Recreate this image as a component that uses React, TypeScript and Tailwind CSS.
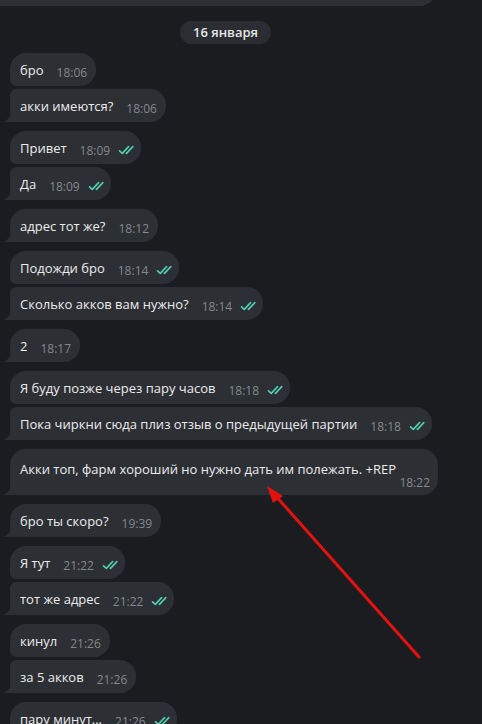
import React from "react";

type Pos = "first" | "mid" | "last" | "single";

type Msg = {
  text: string;
  time: string;
  out?: boolean;
  pos: Pos;
  gap?: boolean;
  wide?: boolean;
};

const messages: Msg[] = [
  { text: "бро", time: "18:06", pos: "first", gap: true },
  { text: "акки имеются?", time: "18:06", pos: "last" },
  { text: "Привет", time: "18:09", out: true, pos: "first", gap: true },
  { text: "Да", time: "18:09", out: true, pos: "last" },
  { text: "адрес тот же?", time: "18:12", pos: "single", gap: true },
  { text: "Подожди бро", time: "18:14", out: true, pos: "first", gap: true },
  { text: "Сколько акков вам нужно?", time: "18:14", out: true, pos: "last" },
  { text: "2", time: "18:17", pos: "single", gap: true },
  { text: "Я буду позже через пару часов", time: "18:18", out: true, pos: "first", gap: true },
  { text: "Пока чиркни сюда плиз отзыв о предыдущей партии", time: "18:18", out: true, pos: "last" },
  { text: "Акки топ, фарм хороший но нужно дать им полежать. +REP", time: "18:22", pos: "single", gap: true, wide: true },
  { text: "бро ты скоро?", time: "19:39", pos: "single", gap: true },
  { text: "Я тут", time: "21:22", out: true, pos: "first", gap: true },
  { text: "тот же адрес", time: "21:22", out: true, pos: "last" },
  { text: "кинул", time: "21:26", pos: "first", gap: true },
  { text: "за 5 акков", time: "21:26", pos: "last" },
  { text: "пару минут...", time: "21:26", out: true, pos: "first", gap: true },
];

const corners: Record<Pos, string> = {
  first: "rounded-r-[16px] rounded-tl-[16px] rounded-bl-[6px]",
  mid: "rounded-r-[16px] rounded-l-[6px]",
  last: "rounded-r-[16px] rounded-tl-[6px] rounded-bl-none",
  single: "rounded-r-[16px] rounded-tl-[16px] rounded-bl-none",
};

function Checks() {
  return (
    <svg width="17" height="10" viewBox="0 0 17 10" fill="none" className="ml-[8px] mt-[5px] shrink-0">
      <path d="M1.5 5.8 L4.3 8.4 L10.6 1.6" stroke="#52cfae" strokeWidth="1.6" strokeLinecap="round" strokeLinejoin="round" />
      <path d="M8.2 8.2 L8.5 8.4 L14.8 1.6" stroke="#52cfae" strokeWidth="1.6" strokeLinecap="round" strokeLinejoin="round" />
    </svg>
  );
}

function Tail() {
  return (
    <svg width="8" height="11" viewBox="0 0 8 11" className="absolute -left-[7px] bottom-0">
      <path d="M8 0 Q7.5 9 0 11 L8 11 Z" fill="#2c2f34" />
    </svg>
  );
}

function Bubble({ m }: { m: Msg }) {
  const hasTail = m.pos === "last" || m.pos === "single";
  if (m.wide) {
    return (
      <div className={`relative flex w-[428px] flex-col bg-[#2c2f34] pl-[10px] pr-[8px] pt-[11px] pb-[4px] ${corners[m.pos]} ${m.gap ? "mt-[9px]" : "mt-[3px]"}`}>
        {hasTail && <Tail />}
        <span className="text-[13px] leading-[18px] text-[#ececec]">{m.text}</span>
        <span className="-mt-[3px] self-end text-[12px] leading-[16px] text-[#85888d]">{m.time}</span>
      </div>
    );
  }
  return (
    <div className={`relative flex h-[33px] items-center self-start bg-[#2c2f34] pl-[10px] ${m.out ? "pr-[6px]" : "pr-[9px]"} ${corners[m.pos]} ${m.gap ? "mt-[9px]" : "mt-[3px]"}`}>
      {hasTail && <Tail />}
      <span className="text-[13px] leading-[18px] text-[#ececec]">{m.text}</span>
      <span className="ml-[13px] mt-[6px] text-[12px] leading-[16px] text-[#85888d]">{m.time}</span>
      {m.out && <Checks />}
    </div>
  );
}

export default function App() {
  return (
    <div className="relative h-[724px] w-[482px] overflow-hidden bg-[#1b1c20] font-['Open_Sans',sans-serif]">
      <div className="flex flex-col px-[10px]">
        {/* previous message, cut off */}
        <div className="-ml-[10px] -mt-[27px] h-[33px] w-[436px] rounded-br-[16px] bg-[#2c2f34]" />

        <div className="mt-[15px] flex">
          <div className="ml-[170px] flex h-[23px] items-center rounded-full bg-[#2a2d32] px-[13px] text-[13px] font-semibold text-[#e6e6e6]">
            16 января
          </div>
        </div>

        {messages.map((m, i) => (
          <Bubble key={i} m={m} />
        ))}
      </div>

      {/* red annotation arrow */}
      <svg className="pointer-events-none absolute left-0 top-0" width="482" height="724" viewBox="0 0 482 724">
        <line x1="419" y1="657" x2="274" y2="494" stroke="#e3120f" strokeWidth="3" strokeLinecap="round" />
        <polygon points="267,486 283,496 273,503" fill="#e3120f" />
      </svg>
    </div>
  );
}
